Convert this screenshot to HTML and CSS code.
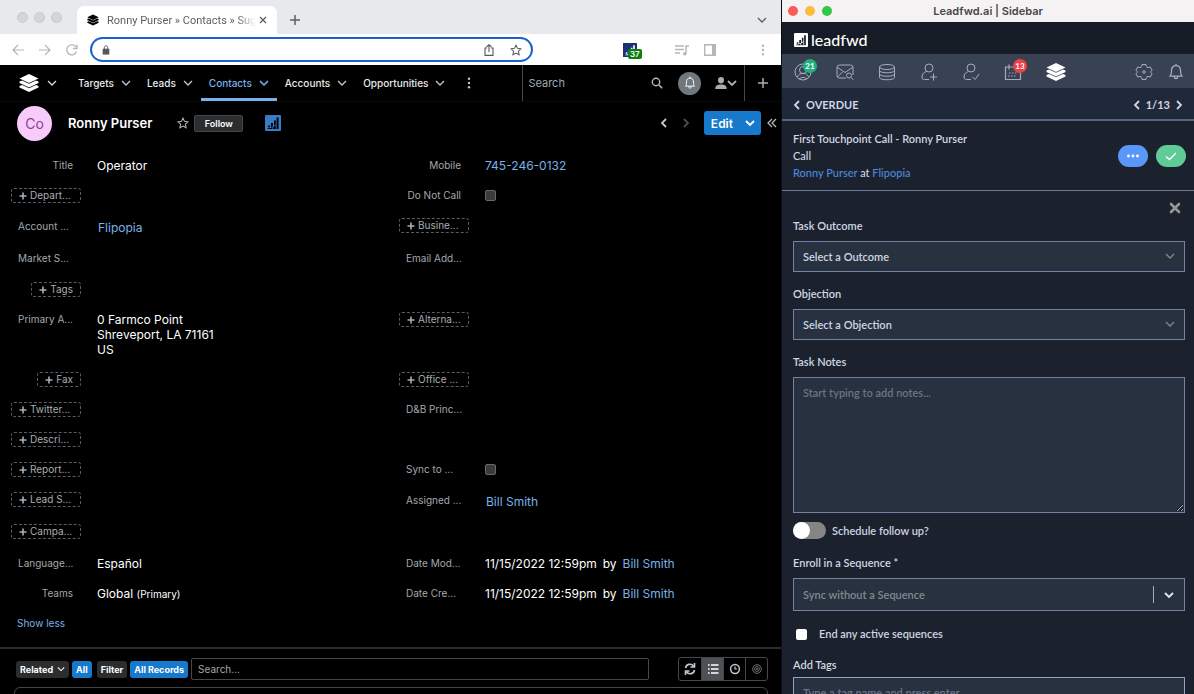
FILE: index.html
```html
<!DOCTYPE html>
<html lang="en">
<head>
    <meta charset="UTF-8">
    <meta name="viewport" content="width=device-width, initial-scale=1.0">
    <title>Ronny Purser » Contacts</title>
    <link rel="stylesheet" href="styles.css">
</head>
<body>

    <!-- Shared icons -->
    <svg class="sprite" aria-hidden="true">
        <symbol id="chevron" viewBox="0 0 10 10"><path d="M1 3l4 4 4-4" fill="none" stroke="currentColor" stroke-width="1.3"/></symbol>
        <symbol id="chevron-bold" viewBox="0 0 10 10"><path d="M1 3l4 4 4-4" fill="none" stroke="currentColor" stroke-width="1.8"/></symbol>
        <symbol id="left" viewBox="0 0 10 10"><path d="M7 1L3 5l4 4" fill="none" stroke="currentColor" stroke-width="1.8"/></symbol>
        <symbol id="right" viewBox="0 0 10 10"><path d="M3 1l4 4-4 4" fill="none" stroke="currentColor" stroke-width="1.8"/></symbol>
        <symbol id="stack" viewBox="0 0 20 20"><path fill="currentColor" d="M10 1l9.5 4.5L10 10 .5 5.500zM.5 8.500l2.500-.9 7 3.200 7-3.200 2.500.9v1.600L10 14.500.5 10.100zM.5 13l2.500-.9 7 3.200 7-3.200 2.500.9v1.600L10 19 .5 14.600z"/></symbol>
        <symbol id="star" viewBox="0 0 16 16"><path d="M8 1.500l2 4.300 4.700.6-3.500 3.200.9 4.700L8 12l-4.100 2.300.9-4.700L1.300 6.400 6 5.800z" fill="none" stroke="currentColor" stroke-width="1.4"/></symbol>
        <symbol id="bars" viewBox="0 0 16 16"><path fill="currentColor" d="M3.200 10.500h1.800V12l-1.800.6zM6 8h2v3.200l-2 .7zM9 5.500h1.800v4l-1.800 1.200zM11.600 2.500h1.900V14h-1.900V10zM2.500 13.400l5-1.200V14h-5zM8.200 12l2.600-1.700V14H8.200z"/></symbol>
        <symbol id="dots" viewBox="0 0 4 14"><g fill="currentColor"><circle cx="2" cy="2" r="1.400"/><circle cx="2" cy="7" r="1.400"/><circle cx="2" cy="12" r="1.400"/></g></symbol>
        <symbol id="plus" viewBox="0 0 12 12"><path d="M6 1v10M1 6h10" stroke="currentColor" stroke-width="1.500" fill="none"/></symbol>
        <symbol id="plus-bold" viewBox="0 0 8 8"><path d="M4 .5v7M.5 4h7" stroke="currentColor" stroke-width="1.600" fill="none"/></symbol>
        <symbol id="bell" viewBox="0 0 20 20"><path d="M3.500 14.500c1.500-1.500 1.500-3 1.500-6C5 5 7 3 10 3s5 2 5 5.500c0 3 0 4.500 1.500 6zM8 15c0 3 4 3 4 0M10 1v2" fill="none" stroke="currentColor" stroke-width="1.400"/></symbol>
    </svg>

    <div class="browser">
        <div class="tabs">
            <span class="light"></span><span class="light"></span><span class="light"></span>
            <div class="tab">
                <svg class="i12"><use href="#stack"/></svg>
                <span class="tab-title">Ronny Purser » Contacts » Sug</span>
                <button class="tab-close" aria-label="Close tab"><svg class="i8" viewBox="0 0 8 8"><path d="M1 1l6 6M7 1L1 7" stroke="currentColor" stroke-width="1.300"/></svg></button>
            </div>
            <button class="new-tab" aria-label="New tab"><svg class="i12"><use href="#plus"/></svg></button>
            <button class="tab-list" aria-label="Search tabs"><svg class="i10"><use href="#chevron"/></svg></button>
        </div>

        <div class="toolbar">
            <button aria-label="Back"><svg class="i12" viewBox="0 0 12 12"><path d="M12 6H1M6 1L1 6l5 5" fill="none" stroke="currentColor" stroke-width="1.200"/></svg></button>
            <button aria-label="Forward"><svg class="i12" viewBox="0 0 12 12"><path d="M0 6h11M6 1l5 5-5 5" fill="none" stroke="currentColor" stroke-width="1.200"/></svg></button>
            <button aria-label="Reload"><svg class="i12" viewBox="0 0 12 12"><path d="M10.500 7.500A5 5 0 1 1 10 3.200M11 .5v4H7" fill="none" stroke="currentColor" stroke-width="1.300"/></svg></button>
            <div class="address">
                <svg class="i10" viewBox="0 0 10 12"><path fill="currentColor" d="M1 4.500h8v7H1z"/><path d="M3 5V3c0-2.600 4-2.600 4 0v2" fill="none" stroke="currentColor" stroke-width="1.200"/></svg>
                <input type="text" aria-label="Address">
                <button aria-label="Share"><svg class="i12" viewBox="0 0 12 12"><path d="M4 4H2v7.400h8V4H8M6 8V1M3.500 3L6 .7 8.500 3" fill="none" stroke="currentColor" stroke-width="1.100"/></svg></button>
                <button aria-label="Bookmark"><svg class="i12"><use href="#star"/></svg></button>
            </div>
            <button class="extension" aria-label="Extension">
                <svg class="i14"><use href="#bars"/></svg>
                <span class="ext-count">37</span>
            </button>
            <button class="media" aria-label="Media"><svg class="i14" viewBox="0 0 14 14"><path d="M0 3h9M0 6.500h9M0 10h5M11 10.500V3h3" fill="none" stroke="currentColor" stroke-width="1.400"/><circle cx="9.800" cy="10.800" r="1.800" fill="currentColor"/></svg></button>
            <button aria-label="Side panel"><svg class="i12" viewBox="0 0 12 12"><path d="M.7.7h10.600v10.600H.7z" fill="none" stroke="currentColor" stroke-width="1.400"/><path d="M8 1h3v10H8z" fill="currentColor"/></svg></button>
            <button class="more" aria-label="Menu"><svg class="i12"><use href="#dots"/></svg></button>
        </div>

        <nav class="nav">
            <button class="home" aria-label="Home"><svg class="i20"><use href="#stack"/></svg><svg class="i10"><use href="#chevron"/></svg></button>
            <a href="#">Targets <svg class="i10"><use href="#chevron"/></svg></a>
            <a href="#">Leads <svg class="i10"><use href="#chevron"/></svg></a>
            <a href="#" class="current">Contacts <svg class="i10"><use href="#chevron-bold"/></svg></a>
            <a href="#">Accounts <svg class="i10"><use href="#chevron"/></svg></a>
            <a href="#">Opportunities <svg class="i10"><use href="#chevron"/></svg></a>
            <button class="nav-more" aria-label="More modules"><svg class="i12"><use href="#dots"/></svg></button>
            <div class="nav-search">
                <input type="text" placeholder="Search" aria-label="Search">
                <svg class="i12" viewBox="0 0 12 12"><circle cx="5" cy="5" r="3.700" fill="none" stroke="currentColor" stroke-width="1.400"/><path d="M8 8l3.200 3.200" stroke="currentColor" stroke-width="1.600"/></svg>
            </div>
            <button class="alerts" aria-label="Notifications"><svg class="i14"><use href="#bell"/></svg></button>
            <button class="user" aria-label="Account"><svg class="i12" viewBox="0 0 12 12"><path fill="currentColor" d="M6 0a3 3 0 0 1 3 3c0 2-1 3.500-3 3.500S3 5 3 3a3 3 0 0 1 3-3zM.3 12c0-3.500 2-4.500 5.700-4.500s5.700 1 5.700 4.500z"/></svg><svg class="i10"><use href="#chevron-bold"/></svg></button>
            <button class="create" aria-label="Create"><svg class="i12"><use href="#plus"/></svg></button>
        </nav>

        <header class="record">
            <span class="avatar">Co</span>
            <h1>Ronny Purser</h1>
            <button class="fav" aria-label="Favorite"><svg class="i12"><use href="#star"/></svg></button>
            <button class="follow">Follow</button>
            <button class="lead-btn" aria-label="Leadfwd"><svg class="i16"><use href="#bars"/></svg></button>
            <button class="prev" aria-label="Previous record"><svg class="i10"><use href="#left"/></svg></button>
            <button class="next" aria-label="Next record"><svg class="i10"><use href="#right"/></svg></button>
            <div class="edit-group">
                <button class="edit">Edit</button>
                <button class="edit-more" aria-label="More actions"><svg class="i10"><use href="#chevron-bold"/></svg></button>
            </div>
            <button class="collapse" aria-label="Collapse"><svg class="i10" viewBox="0 0 10 10"><path d="M5 1L1 5l4 4M9 1L5 5l4 4" fill="none" stroke="currentColor" stroke-width="1.300"/></svg></button>
        </header>

        <main class="fields">
            <div class="row"><span class="label">Title</span><span class="value">Operator</span></div>
            <div class="row"><span class="label">Mobile</span><a href="#" class="value">745-246-0132</a></div>

            <div class="row"><div class="slot"><button class="add wide"><svg class="i8"><use href="#plus-bold"/></svg>Depart...</button></div></div>
            <div class="row"><label class="label" for="dnc">Do Not Call</label><input type="checkbox" id="dnc" class="check"></div>

            <div class="row tall"><span class="label cut">Account ...</span><a href="#" class="value pill">Flipopia</a></div>
            <div class="row"><div class="slot"><button class="add wide"><svg class="i8"><use href="#plus-bold"/></svg>Busine...</button></div></div>

            <div class="row tall"><span class="label cut">Market S...</span></div>
            <div class="row tall"><span class="label cut">Email Add...</span></div>

            <div class="row"><div class="slot"><button class="add"><svg class="i8"><use href="#plus-bold"/></svg>Tags</button></div></div>
            <div class="row"></div>

            <div class="row address-row"><span class="label cut">Primary A...</span><span class="value">0 Farmco Point<br>Shreveport, LA 71161<br>US</span></div>
            <div class="row"><div class="slot"><button class="add wide"><svg class="i8"><use href="#plus-bold"/></svg>Alterna...</button></div></div>

            <div class="row"><div class="slot"><button class="add"><svg class="i8"><use href="#plus-bold"/></svg>Fax</button></div></div>
            <div class="row"><div class="slot"><button class="add wide"><svg class="i8"><use href="#plus-bold"/></svg>Office ...</button></div></div>

            <div class="row"><div class="slot"><button class="add wide"><svg class="i8"><use href="#plus-bold"/></svg>Twitter...</button></div></div>
            <div class="row"><span class="label cut">D&amp;B Princ...</span></div>

            <div class="row"><div class="slot"><button class="add wide"><svg class="i8"><use href="#plus-bold"/></svg>Descri...</button></div></div>
            <div class="row"></div>

            <div class="row"><div class="slot"><button class="add wide"><svg class="i8"><use href="#plus-bold"/></svg>Report...</button></div></div>
            <div class="row"><label class="label cut" for="sync">Sync to ...</label><input type="checkbox" id="sync" class="check"></div>

            <div class="row"><div class="slot"><button class="add wide"><svg class="i8"><use href="#plus-bold"/></svg>Lead S...</button></div></div>
            <div class="row tall"><span class="label cut">Assigned ...</span><a href="#" class="value pill">Bill Smith</a></div>

            <div class="row tall"><div class="slot"><button class="add wide"><svg class="i8"><use href="#plus-bold"/></svg>Campa...</button></div></div>
            <div class="row"></div>

            <div class="row"><span class="label cut">Language...</span><span class="value">Español</span></div>
            <div class="row"><span class="label cut">Date Mod...</span><span class="value stamp"><span>11/15/2022 12:59pm</span><span>by</span><a href="#">Bill Smith</a></span></div>

            <div class="row"><span class="label">Teams</span><span class="value">Global <small>(Primary)</small></span></div>
            <div class="row"><span class="label cut">Date Cre...</span><span class="value stamp"><span>11/15/2022 12:59pm</span><span>by</span><a href="#">Bill Smith</a></span></div>

            <div class="row"><a href="#" class="show-less">Show less</a></div>
        </main>

        <section class="related">
            <div class="filters">
                <button class="chip">Related <svg class="i8"><use href="#chevron"/></svg></button>
                <button class="chip on">All</button>
                <button class="chip filter">Filter</button>
                <button class="chip on">All Records</button>
                <input type="text" placeholder="Search..." aria-label="Search related records">
                <div class="views">
                    <button aria-label="Refresh"><svg class="i12" viewBox="0 0 12 12"><path d="M1.500 5A4.500 4.500 0 0 1 9.500 3M10.500 7a4.500 4.500 0 0 1-8 2M10.500 0v4h-4M1.500 12V8h4" fill="none" stroke="currentColor" stroke-width="1.600"/></svg></button>
                    <button class="selected" aria-label="List view"><svg class="i12" viewBox="0 0 12 12"><path d="M1 2h1.600M4 2h7.500M1 6h1.600M4 6h7.500M1 10h1.600M4 10h7.500" stroke="currentColor" stroke-width="1.700"/></svg></button>
                    <button aria-label="Timeline"><svg class="i12" viewBox="0 0 12 12"><circle cx="6" cy="6" r="4.400" fill="none" stroke="currentColor" stroke-width="1.500"/><path d="M6 3.500V6h2" fill="none" stroke="currentColor" stroke-width="1.200"/></svg></button>
                    <button class="dim" aria-label="Activity"><svg class="i12" viewBox="0 0 12 12"><circle cx="6" cy="6" r="4.300" fill="none" stroke="currentColor"/><circle cx="6" cy="6" r="2.400" fill="none" stroke="currentColor"/><circle cx="6" cy="6" r="1" fill="currentColor"/></svg></button>
                </div>
            </div>
            <div class="panel"></div>
        </section>
    </div>

    <aside class="sidebar">
        <div class="titlebar">
            <span class="light red"></span><span class="light yellow"></span><span class="light green"></span>
            <span class="title">Leadfwd.ai | Sidebar</span>
        </div>
        <div class="brand">
            <span class="logo"><svg class="i14"><use href="#bars"/></svg></span>
            <span>leadfwd</span>
        </div>

        <div class="tools">
            <button aria-label="Contact">
                <svg class="i18" viewBox="0 0 18 18" fill="none" stroke="currentColor"><circle cx="9" cy="9" r="8"/><circle cx="9" cy="7" r="3.500"/><path d="M3.500 14c1-3 3-3.500 5.500-3.500s4.500.5 5.500 3.500M5 16c2-2 6-2 8 0"/></svg>
                <span class="badge">21</span>
            </button>
            <button aria-label="Email search"><svg class="i18" viewBox="0 0 18 18" fill="none" stroke="currentColor"><path d="M10 15H3.500A2.500 2.500 0 0 1 1 12.500v-8A2.500 2.500 0 0 1 3.500 2h11A2.500 2.500 0 0 1 17 4.500V12M1 4l8 5.500L17 4M1.500 14l5-5"/><circle cx="13" cy="12.500" r="2.500"/><path d="M15 14.500l2.300 2.300"/></svg></button>
            <button aria-label="Database"><svg class="i18" viewBox="0 0 18 18" fill="none" stroke="currentColor"><ellipse cx="9" cy="4" rx="7.500" ry="2.500"/><path d="M1.500 4v10.500c0 3 15 3 15 0V4M1.500 7.500c0 3 15 3 15 0M1.500 11c0 3 15 3 15 0"/></svg></button>
            <button aria-label="Add person"><svg class="i18" viewBox="0 0 18 18" fill="none" stroke="currentColor"><circle cx="9" cy="5" r="4"/><path d="M6.500 8.500C3.500 9.500 2 11 2 14c0 2 1 2.500 2.500 2.500H9M13.500 10.500v7M10 14h7"/></svg></button>
            <button aria-label="Verify person"><svg class="i18" viewBox="0 0 18 18" fill="none" stroke="currentColor"><circle cx="9" cy="5" r="4"/><path d="M6.500 8.500C3.500 9.500 2 11 2 14c0 2 1 2.500 2.500 2.500H9M10.500 14l2.500 2.500 4-5.500"/></svg></button>
            <button aria-label="Calendar">
                <svg class="i18" viewBox="0 0 18 18" fill="none" stroke="currentColor" stroke-width="1.200"><path d="M5 4H1.500v12.500h15V4M5 1.500v5M12 1.500v5M5 4h7"/><path d="M5 10h9M4 13h8" stroke-dasharray="1.500 1.500"/></svg>
                <span class="badge red">13</span>
            </button>
            <button class="active" aria-label="Tasks"><svg class="i20"><use href="#stack"/></svg></button>
            <button class="settings" aria-label="Settings"><svg class="i18" viewBox="0 0 18 18" fill="none" stroke="currentColor"><path d="M7 1.500h4l.4 2.200 1.600 1 2.200-.8 1.900 3.300L15.500 9l1.600 1.800-1.900 3.300-2.200-.8-1.600 1-.4 2.200H7l-.4-2.200-1.600-1-2.200.8-1.900-3.300L2.500 9 .9 7.200l1.900-3.300 2.200.8 1.600-1z" stroke-linejoin="round"/><circle cx="9" cy="9" r="1.300"/></svg></button>
            <button aria-label="Notifications"><svg class="i18"><use href="#bell"/></svg></button>
        </div>

        <div class="queue">
            <button aria-label="Back to tasks"><svg class="i10"><use href="#left"/></svg></button>
            <h2>OVERDUE</h2>
            <button aria-label="Previous task"><svg class="i10"><use href="#left"/></svg></button>
            <span>1/13</span>
            <button aria-label="Next task"><svg class="i10"><use href="#right"/></svg></button>
        </div>

        <div class="task">
            <div class="task-info">
                <h3>First Touchpoint Call - Ronny Purser</h3>
                <p>Call</p>
                <p><a href="#">Ronny Purser</a> at <a href="#">Flipopia</a></p>
            </div>
            <button class="round blue" aria-label="Options"><svg class="i14" viewBox="0 0 14 14"><g fill="currentColor"><circle cx="2.500" cy="7" r="1.400"/><circle cx="7" cy="7" r="1.400"/><circle cx="11.500" cy="7" r="1.400"/></g></svg></button>
            <button class="round green" aria-label="Complete"><svg class="i14" viewBox="0 0 14 14"><path d="M2 7.500l3.500 3L12 4" fill="none" stroke="currentColor" stroke-width="1.400"/></svg></button>
        </div>

        <form class="form">
            <button type="button" class="close" aria-label="Close"><svg class="i12" viewBox="0 0 12 12"><path d="M2 2l8 8M10 2l-8 8" stroke="currentColor" stroke-width="2.600" stroke-linecap="round"/></svg></button>

            <div class="field">
                <label for="outcome">Task Outcome</label>
                <div class="select">
                    <select id="outcome"><option>Select a Outcome</option></select>
                    <svg class="i10"><use href="#chevron"/></svg>
                </div>
            </div>
            <div class="field">
                <label for="objection">Objection</label>
                <div class="select">
                    <select id="objection"><option>Select a Objection</option></select>
                    <svg class="i10"><use href="#chevron"/></svg>
                </div>
            </div>
            <div class="field">
                <label for="notes">Task Notes</label>
                <textarea id="notes" placeholder="Start typing to add notes..."></textarea>
            </div>
            <div class="switch-row">
                <input type="checkbox" id="follow-up" class="switch">
                <label for="follow-up">Schedule follow up?</label>
            </div>
            <div class="field">
                <label for="sequence">Enroll in a Sequence *</label>
                <div class="select sequence">
                    <select id="sequence"><option>Sync without a Sequence</option></select>
                    <svg class="i10"><use href="#chevron-bold"/></svg>
                </div>
            </div>
            <div class="end-row">
                <input type="checkbox" id="end">
                <label for="end">End any active sequences</label>
            </div>
            <div class="field tags">
                <label for="tags">Add Tags</label>
                <input type="text" id="tags" placeholder="Type a tag name and press enter">
            </div>
        </form>
    </aside>

</body>
</html>
```

FILE: styles.css
```css
/* Basic Reset */
* {
    margin: 0;
    padding: 0;
    box-sizing: border-box;
}

body {
    display: flex;
    height: 100vh;
    overflow: hidden;
    background: #000;
    font-family: 'Inter', sans-serif;
    font-size: 12px;
    line-height: 15px;
}

button, input, select, textarea {
    font: inherit;
    color: inherit;
    background: none;
    border: none;
    outline: none;
}

button {
    display: flex;
    align-items: center;
    justify-content: center;
    flex-shrink: 0;
    cursor: pointer;
}

a {
    color: #7cb0e8;
    text-decoration: none;
}

/* Icons */
svg {
    display: block;
    flex-shrink: 0;
}

.sprite {
    position: absolute;
    width: 0;
    height: 0;
}

.i8 { width: 8px; height: 8px; }
.i10 { width: 10px; height: 10px; }
.i12 { width: 12px; height: 12px; }
.i14 { width: 14px; height: 14px; }
.i16 { width: 16px; height: 16px; }
.i18 { width: 18px; height: 18px; }
.i20 { width: 20px; height: 20px; }

/* Browser window */
.browser {
    flex: 1;
    min-width: 0;
    display: flex;
    flex-direction: column;
    color: #fff;
}

.browser > * {
    flex-shrink: 0;
}

.tabs {
    display: flex;
    align-items: center;
    height: 34px;
    padding: 0 14px 0 17px;
    background: #e7e9ed;
    color: #5b5e63;
}

.light {
    width: 11px;
    height: 11px;
    margin-right: 6px;
    border-radius: 50%;
    background: #d4d5d7;
    border: 1px solid #c8c9cb;
}

.tab {
    display: flex;
    align-items: center;
    align-self: flex-end;
    width: 200px;
    height: 28px;
    margin-left: 9px;
    padding: 0 10px;
    border-radius: 7px 7px 0 0;
    background: #fff;
}

.tab > svg {
    color: #000;
}

.tab-title {
    flex: 1;
    min-width: 0;
    margin-left: 8px;
    white-space: nowrap;
    font-family: 'Roboto', sans-serif;
    font-size: 11px;
    -webkit-mask-image: linear-gradient(90deg, #000 86%, transparent 98%);
    mask-image: linear-gradient(90deg, #000 86%, transparent 98%);
}

.new-tab {
    margin-left: 12px;
    padding-top: 5px;
}

.tab-list {
    margin-left: auto;
    padding-top: 6px;
}

.toolbar {
    display: flex;
    align-items: center;
    gap: 15px;
    height: 31px;
    padding: 0 12px;
    background: #fff;
    color: #b4b6b9;
}

.address {
    display: flex;
    align-items: center;
    gap: 15px;
    width: 443px;
    height: 25px;
    margin-left: -3px;
    padding: 0 9px;
    border: 2px solid #1b62d0;
    border-radius: 13px;
    color: #55585d;
}

.address input {
    flex: 1;
    min-width: 0;
}

.extension {
    position: relative;
    margin: 0 23px 0 75px;
    background: #1d3275;
    color: #fff;
}

.ext-count {
    position: absolute;
    top: 6px;
    left: 5px;
    padding: 0 2px;
    border-radius: 2px;
    background: #0b800f;
    color: #fff;
    font-size: 8px;
    font-weight: 600;
    line-height: 10px;
}

.more {
    margin-left: auto;
}

/* Module navigation */
.nav {
    display: flex;
    align-items: center;
    height: 37px;
    border-bottom: 1px solid #080a0c;
    font-size: 10px;
    font-weight: 500;
}

.home {
    gap: 8px;
    margin: 0 13px 0 19px;
}

.home .i10,
.nav a svg {
    opacity: 0.85;
}

.nav a {
    display: flex;
    align-items: center;
    align-self: stretch;
    gap: 7px;
    padding: 0 8px;
    border-bottom: 3px solid transparent;
    border-top: 3px solid transparent;
    color: #e8eaec;
}

.nav a.current {
    border-bottom-color: #7cb0e8;
    color: #7cb0e8;
}

.nav-more {
    margin: 0 47px 0 10px;
    color: #c3c8cc;
}

.nav-search {
    display: flex;
    align-items: center;
    align-self: stretch;
    flex: 1;
    min-width: 0;
    padding: 0 15px 0 5px;
    border-left: 1px solid #45484b;
    color: #b4b9bd;
}

.nav-search input {
    flex: 1;
    min-width: 0;
    font-size: 11px;
    font-weight: 400;
}

.nav-search input::placeholder {
    color: #a3a8ac;
}

.alerts {
    width: 23px;
    height: 23px;
    border-radius: 50%;
    background: #70777d;
}

.user {
    gap: 0;
    margin: 0 7px 0 14px;
    color: #a9aeb2;
}

.create {
    align-self: stretch;
    width: 37px;
    border-left: 1px solid #45484b;
    color: #a9aeb2;
}

/* Record header */
.record {
    display: flex;
    align-items: center;
    height: 42px;
    padding: 0 4px 0 17px;
}

.avatar {
    width: 35px;
    height: 35px;
    border-radius: 50%;
    background: #f8ccfa;
    color: #8d3f91;
    font-size: 14px;
    line-height: 35px;
    text-align: center;
}

.record h1 {
    margin: 0 25px 0 16px;
    font-size: 13px;
    font-weight: 600;
    line-height: 18px;
}

.fav {
    color: #b4b9bd;
}

.follow {
    width: 49px;
    height: 17px;
    margin-left: 5px;
    border: 1px solid #45484a;
    border-radius: 2px;
    background: #2b2d2f;
    font-size: 9px;
    font-weight: 600;
}

.lead-btn {
    margin-left: 22px;
    border-radius: 1px;
    background: #397bc4;
    color: #000;
}

.prev {
    margin-left: auto;
    color: #c3c8cc;
}

.next {
    margin: 0 13px 0 12px;
    color: #4b4e51;
}

.edit-group {
    display: flex;
    height: 24px;
    border-radius: 3px;
    background: #1679cb;
}

.edit {
    padding: 0 4px 0 7px;
    font-weight: 600;
}

.edit-more {
    width: 24px;
    padding-left: 2px;
}

.collapse {
    margin-left: 6px;
    color: #b4b9bd;
}

/* Record fields */
.fields {
    display: grid;
    grid-template-columns: 1fr 1fr;
    padding: 6px 5px 0 0;
}

.row {
    display: flex;
    align-items: flex-start;
    min-height: 30px;
    padding-top: 8px;
}

.label {
    width: 81px;
    padding-right: 8px;
    color: #a3a8ac;
    font-size: 10px;
    text-align: right;
}

.label.cut {
    padding: 0 0 0 18px;
    text-align: left;
}

.value {
    margin-left: 16px;
}

.value.pill {
    padding: 2px 0 0 1px;
}

.tall {
    min-height: 32px;
}

.tall .label {
    padding-top: 1px;
}

.address-row {
    min-height: 60px;
}

.value small {
    font-size: 10px;
}

.stamp {
    display: flex;
    gap: 6px;
}

/* Empty fields */
.slot {
    display: flex;
    justify-content: flex-end;
    width: 81px;
}

.add {
    justify-content: flex-start;
    gap: 3px;
    height: 15px;
    padding: 0 7px;
    border: 1px dashed #5a5d60;
    border-radius: 3px;
    color: #a9aeb2;
    font-size: 10px;
    line-height: 13px;
    white-space: nowrap;
}

.add.wide {
    width: 70px;
}

.check {
    appearance: none;
    width: 11px;
    height: 11px;
    margin: 2px 0 0 16px;
    border: 1px solid #66686a;
    border-radius: 2px;
    background: #3b3b3b;
}

.show-less {
    margin-left: 17px;
    font-size: 10px;
}

/* Related records */
.related {
    margin-top: 9px;
    padding: 8px 13px 0 14px;
    border-top: 2px solid #2b2d2f;
}

.filters {
    display: flex;
    align-items: center;
    gap: 3px;
    padding-left: 2px;
}

.chip {
    gap: 4px;
    height: 17px;
    padding: 0 4px;
    border-radius: 3px;
    background: #2b2d2f;
    font-size: 9px;
    font-weight: 700;
}

.chip.on {
    background: #1679cb;
}

.chip.filter {
    margin-left: 2px;
}

.filters input {
    flex: 1;
    min-width: 0;
    height: 22px;
    padding: 0 6px;
    border: 1px solid #45484b;
    border-radius: 2px;
    font-size: 10px;
}

.filters input::placeholder {
    color: #a3a8ac;
}

.views {
    display: flex;
    height: 24px;
    margin-left: 26px;
    border: 1px solid #45484b;
    border-radius: 3px;
}

.views button {
    width: 22px;
    color: #c3c8cc;
}

.views button + button {
    border-left: 1px solid #45484b;
}

.views .selected {
    background: #4d5155;
    color: #fff;
}

.views .dim {
    color: #6d7276;
}

.panel {
    height: 40px;
    margin-top: 6px;
    border: 1px solid #45484b;
    border-radius: 6px 6px 0 0;
}

/* Leadfwd sidebar */
.sidebar {
    flex: 0 0 413px;
    overflow: hidden;
    border-left: 1px solid #0a0c10;
    background: #1c222d;
    color: #cfd6e4;
    font-family: 'Lato', sans-serif;
    font-size: 11px;
    font-weight: 600;
}

.titlebar {
    position: relative;
    display: flex;
    align-items: center;
    height: 22px;
    padding-left: 6px;
    background: #f5f2f3;
}

.titlebar .light {
    width: 10px;
    height: 10px;
    margin-right: 7px;
    border: none;
}

.titlebar .red { background: #fc5b57; }
.titlebar .yellow { background: #fdbb3e; }
.titlebar .green { background: #33c748; }

.title {
    position: absolute;
    left: 0;
    right: 0;
    color: #474648;
    font-family: 'Inter', sans-serif;
    font-size: 11px;
    font-weight: 600;
    text-align: center;
    pointer-events: none;
}

.brand {
    display: flex;
    align-items: center;
    gap: 3px;
    height: 32px;
    padding: 3px 12px 0;
    background: #151c26;
    color: #fff;
    font-size: 16px;
    font-weight: 500;
}

.logo {
    border-radius: 1px;
    background: #fff;
    color: #151c26;
}

.tools {
    display: flex;
    align-items: center;
    height: 34px;
    padding: 2px 9px 0 12px;
    gap: 24px;
    background: #384252;
    color: #a3adbd;
}

.tools button {
    position: relative;
}

.tools .active {
    color: #fff;
}

.tools .settings {
    margin-left: auto;
    margin-right: -10px;
}

.badge {
    position: absolute;
    top: -4px;
    left: 9px;
    width: 14px;
    height: 14px;
    border-radius: 50%;
    background: #22b07d;
    color: #fff;
    font-size: 8px;
    font-weight: 700;
    line-height: 14px;
    text-align: center;
}

.badge.red {
    background: #ee4145;
}

.queue {
    display: flex;
    align-items: center;
    gap: 4px;
    height: 33px;
    padding: 2px 10px 0 10px;
    border-bottom: 2px solid #56647e;
    background: #20293a;
    font-weight: 700;
}

.queue h2 {
    flex: 1;
    font-size: 11px;
}

.task {
    display: flex;
    align-items: center;
    gap: 8px;
    height: 70px;
    padding: 0 8px 0 11px;
    border-bottom: 1px solid #6a7793;
}

.task-info {
    flex: 1;
    font-weight: 500;
    line-height: 17px;
}

.task-info h3 {
    font-size: 11px;
    font-weight: 600;
}

.task-info a {
    color: #4e86dd;
}

.round {
    width: 30px;
    height: 22px;
    border-radius: 11px;
    color: #fff;
}

.round.blue { background: #5b97f9; }
.round.green { background: #5fcb97; }

.form {
    padding: 11px 9px 0 11px;
    line-height: 14px;
}

.close {
    margin: 0 4px 5px auto;
    color: #979797;
}

.field {
    margin-bottom: 15px;
}

.field label {
    display: block;
    margin-bottom: 8px;
}

.select {
    position: relative;
}

.select select,
.field textarea,
.field input {
    display: block;
    width: 100%;
    padding: 0 9px;
    border: 1px solid #7483a3;
    background: #27313f;
}

.select select {
    appearance: none;
    height: 31px;
}

.select svg {
    position: absolute;
    top: 10px;
    right: 10px;
    color: #7d889a;
    pointer-events: none;
}

.field textarea {
    height: 136px;
    padding-top: 8px;
    resize: vertical;
}

.field ::placeholder {
    color: #6b7586;
}

.switch-row {
    display: flex;
    align-items: center;
    gap: 6px;
    margin: -6px 0 17px;
}

.switch {
    appearance: none;
    display: flex;
    width: 33px;
    height: 17px;
    border-radius: 9px;
    background: #858585;
}

.switch::before {
    content: "";
    width: 17px;
    height: 17px;
    border-radius: 50%;
    background: #fff;
}

.select.sequence select {
    height: 33px;
    color: #838990;
}

.select.sequence svg {
    top: 12px;
    right: 11px;
    color: #e4e8ee;
}

/* Divider before the arrow */
.select.sequence::after {
    content: "";
    position: absolute;
    top: 8px;
    right: 31px;
    width: 1px;
    height: 17px;
    background: #a3adbd;
}

.end-row {
    display: flex;
    align-items: center;
    gap: 12px;
    margin: 0 0 17px 3px;
    padding-top: 1px;
}

.end-row input {
    appearance: none;
    width: 11px;
    height: 11px;
    border-radius: 2px;
    background: #fff;
}

.tags label {
    margin-bottom: 5px;
}

.field #tags {
    height: 30px;
    border-color: #8fa3cc;
}
```
